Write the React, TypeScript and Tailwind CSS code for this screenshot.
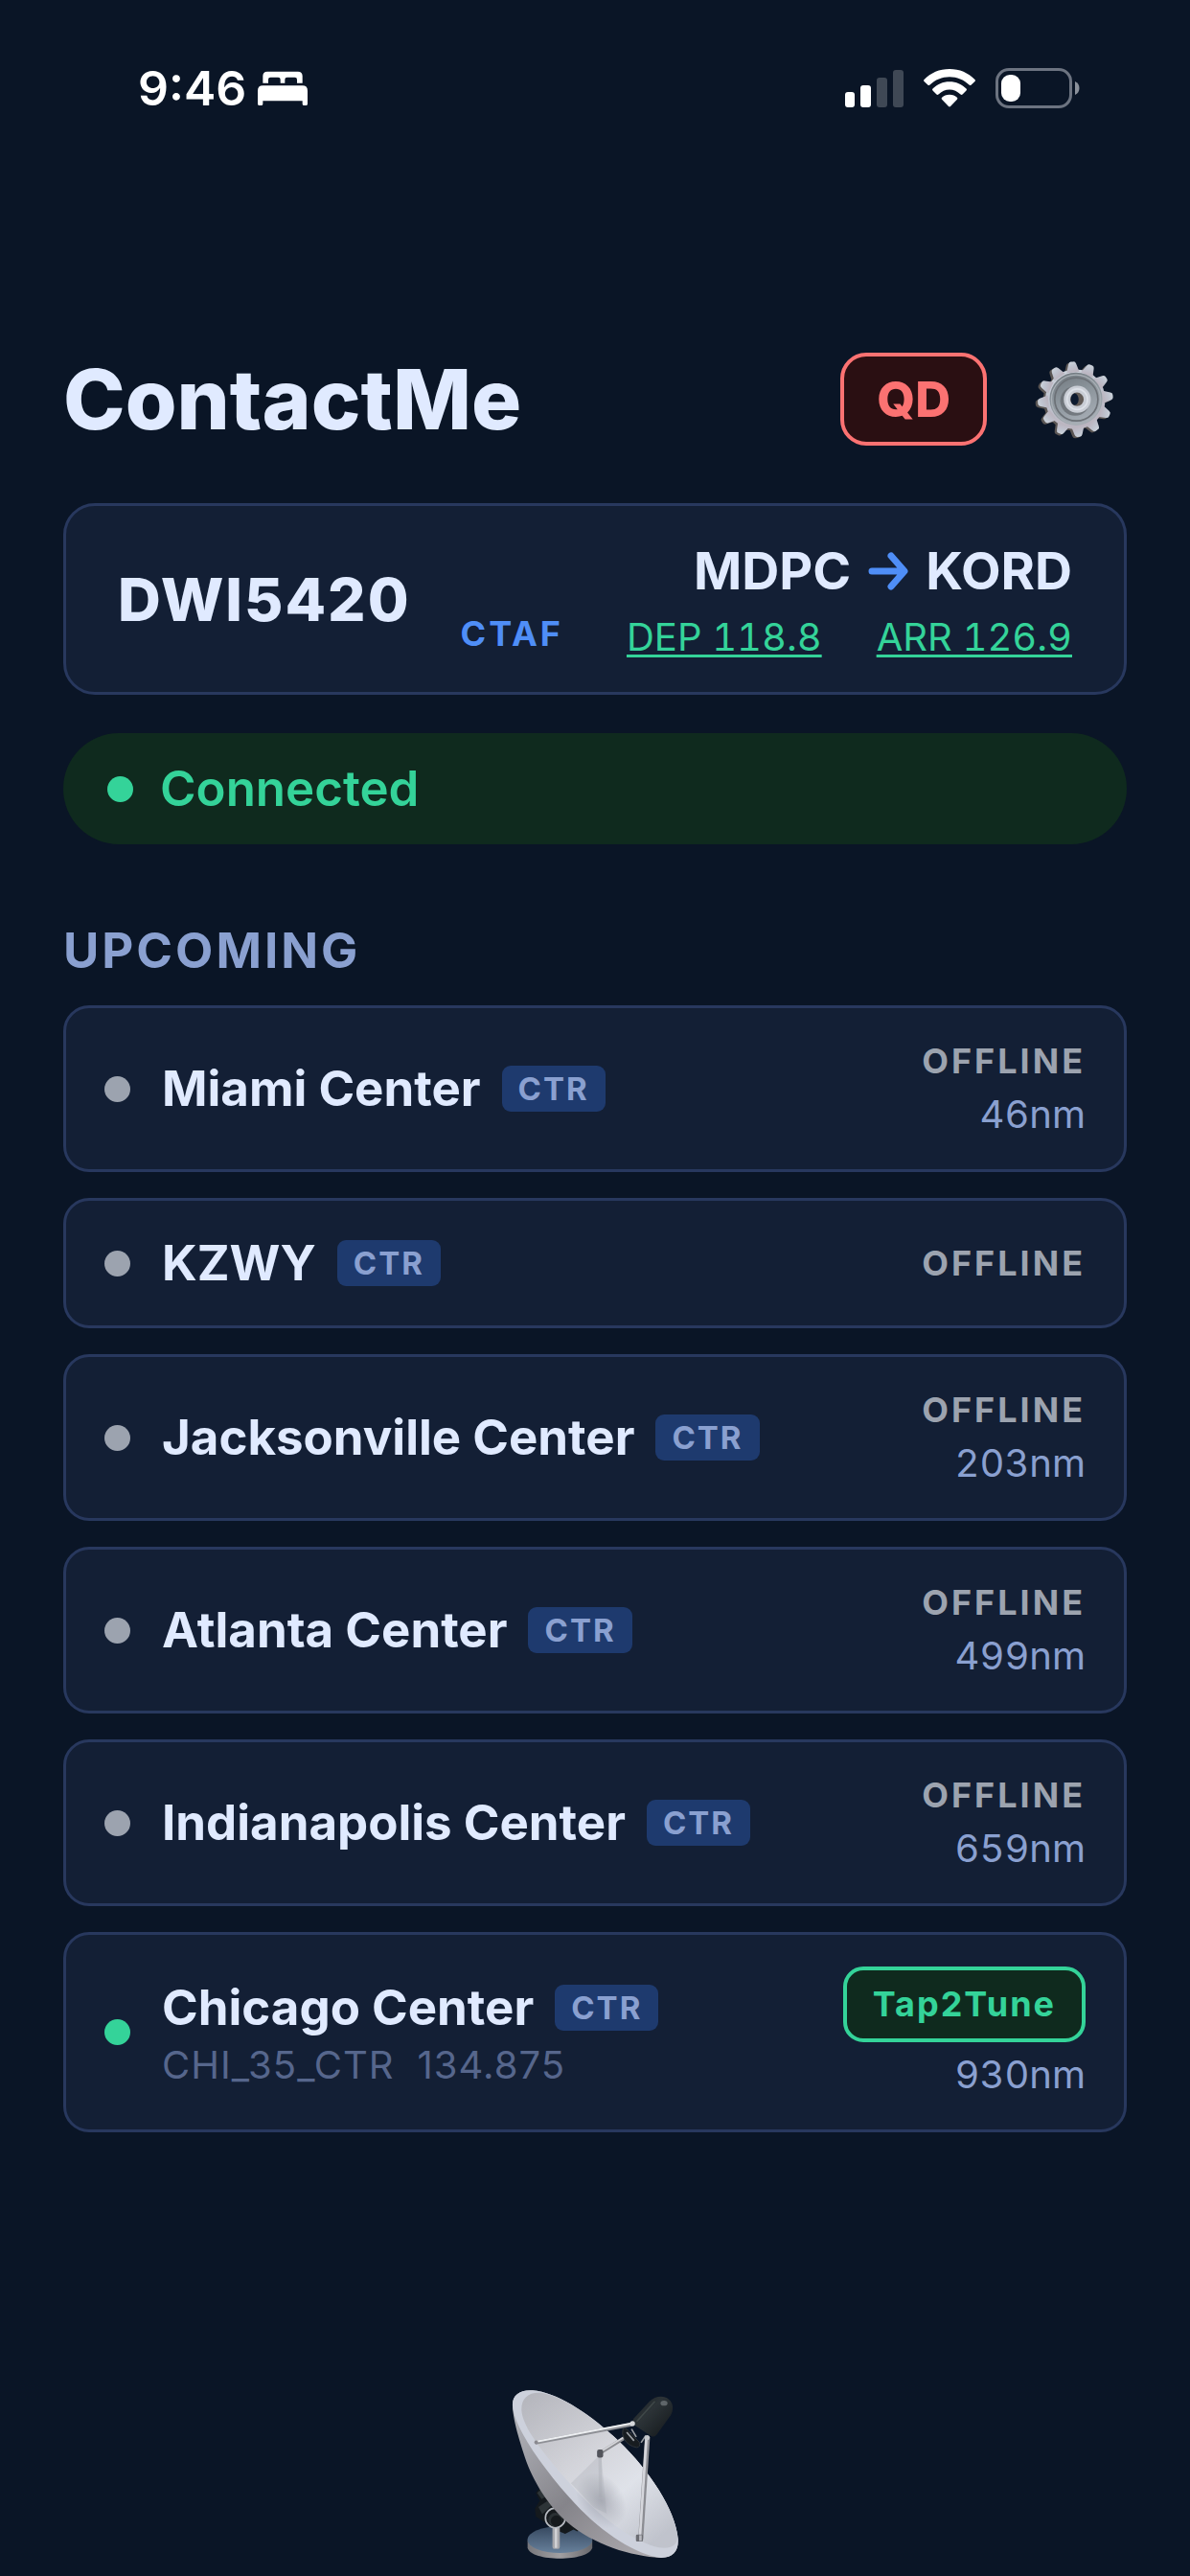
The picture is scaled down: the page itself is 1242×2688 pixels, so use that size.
import clsx from 'clsx';

type Sector = {
  name: string;
  online: boolean;
  distance?: string;
  callsign?: string;
  frequency?: string;
};

const sectors: Sector[] = [
  { name: 'Miami Center', online: false, distance: '46nm' },
  { name: 'KZWY', online: false },
  { name: 'Jacksonville Center', online: false, distance: '203nm' },
  { name: 'Atlanta Center', online: false, distance: '499nm' },
  { name: 'Indianapolis Center', online: false, distance: '659nm' },
  {
    name: 'Chicago Center',
    online: true,
    distance: '930nm',
    callsign: 'CHI_35_CTR',
    frequency: '134.875',
  },
];

const TEETH = [0, 30, 60, 90, 120, 150, 180, 210, 240, 270, 300, 330];

function BedIcon() {
  return (
    <svg viewBox="0 0 156 108" className="h-9 w-[52px]" fill="#fff" aria-hidden="true">
      <path d="M16 38V16Q16 2 30 2H126Q140 2 140 16V38H123V27Q123 20 116 20H92Q85 20 85 27V38H71V27Q71 20 64 20H40Q33 20 33 27V38Z" />
      <path d="M0 62Q0 46 16 46H140Q156 46 156 62V103Q156 109 148 109Q140 109 140 103V94H16V103Q16 109 8 109Q0 109 0 103Z" />
    </svg>
  );
}

function SignalIcon() {
  return (
    <svg viewBox="0 0 61 39" className="h-[39px] w-[61px]" fill="#fff" aria-hidden="true">
      <rect x="0" y="23" width="10" height="16" rx="3" />
      <rect x="16" y="16" width="11" height="23" rx="3" />
      <rect x="33" y="8" width="11" height="31" rx="3" opacity="0.22" />
      <rect x="50" y="0" width="11" height="39" rx="3" opacity="0.22" />
    </svg>
  );
}

function WifiIcon() {
  return (
    <svg viewBox="312 62 162 121" className="h-10 w-[54px]" fill="#fff" aria-hidden="true">
      <path d="M393 62C425 62 452 74 473 95Q476 98 473 101L461 113Q458 115 455 112C438 96 417 87 393 87C369 87 348 96 331 112Q328 115 325 113L313 101Q310 98 313 95C334 74 361 62 393 62Z" />
      <path d="M393 102C414 102 432 110 446 124Q449 127 446 130L434 142Q431 145 428 142C418 133 406 127 393 127C380 127 368 133 358 142Q355 145 352 142L340 130Q337 127 340 124C354 110 372 102 393 102Z" />
      <path d="M393 143C403 143 411 147 417 152Q420 155 417 158L396 180Q393 183 390 180L369 158Q366 155 369 152C375 147 383 143 393 143Z" />
    </svg>
  );
}

function BatteryIcon() {
  return (
    <svg viewBox="0 0 88 42" className="h-[42px] w-[88px]" aria-hidden="true">
      <rect x="1.5" y="1.5" width="77" height="39" rx="12.5" fill="none" stroke="#6c7380" strokeWidth="3" />
      <rect x="6" y="7" width="20" height="28" rx="9" fill="#fff" />
      <path d="M83 14Q87.500 16 87.500 21T83 28Z" fill="#8b919b" />
    </svg>
  );
}

function Gear({ fill }: { fill: string }) {
  return (
    <g fill={fill}>
      <circle r="93" />
      {TEETH.map((angle) => (
        <path
          key={angle}
          transform={`rotate(${angle - 5})`}
          d="M-20 -84L-12 -110Q-10 -117 -4 -117H4Q10 -117 12 -110L20 -84Z"
        />
      ))}
    </g>
  );
}

function GearIcon() {
  return (
    <svg viewBox="62 79 244 244" className="size-[82px]" aria-hidden="true">
      <defs>
        <linearGradient id="gearFace" x1="0" y1="0" x2="0.300" y2="1">
          <stop offset="0" stopColor="#d0d8df" />
          <stop offset="0.500" stopColor="#bfc3cf" />
          <stop offset="1" stopColor="#bbb5c0" />
        </linearGradient>
        <linearGradient id="gearWell" x1="0" y1="0" x2="0.400" y2="1">
          <stop offset="0" stopColor="#6d747b" />
          <stop offset="0.500" stopColor="#8b949b" />
          <stop offset="1" stopColor="#a4abb3" />
        </linearGradient>
      </defs>
      <g transform="translate(181 204)">
        <Gear fill="#5b5654" />
      </g>
      <g transform="translate(188 200)">
        <Gear fill="url(#gearFace)" />
      </g>
      <circle cx="190" cy="199" r="82" fill="url(#gearWell)" />
      <circle cx="190" cy="200" r="76" fill="none" stroke="#a9b0b6" strokeWidth="4" />
      <circle cx="191" cy="200" r="67" fill="none" stroke="#6c7177" strokeWidth="5" />
      <circle cx="187" cy="205" r="46" fill="#62676c" opacity="0.700" />
      <circle cx="194" cy="200" r="42" fill="#c9cdd5" />
      <circle cx="194" cy="200" r="32" fill="none" stroke="#dde1e8" strokeWidth="5" />
      <circle cx="193" cy="200" r="21" fill="#615a56" />
      <ellipse cx="186" cy="200" rx="12" ry="18" fill="#0d1b30" />
    </svg>
  );
}

function DishIcon() {
  return (
    <svg viewBox="92 100 530 532" className="size-[177px]" aria-hidden="true">
      <defs>
        <linearGradient id="dishFace" x1="0" y1="0" x2="0.800" y2="1">
          <stop offset="0" stopColor="#b3b4bb" />
          <stop offset="0.450" stopColor="#d3d4da" />
          <stop offset="0.700" stopColor="#dfe2e9" />
          <stop offset="1" stopColor="#c0c3cc" />
        </linearGradient>
        <linearGradient id="dishBack" x1="0" y1="0" x2="1" y2="1">
          <stop offset="0" stopColor="#b9bbc2" />
          <stop offset="0.500" stopColor="#85848a" />
          <stop offset="1" stopColor="#b7b4b8" />
        </linearGradient>
        <linearGradient id="dishBase" x1="0" y1="0" x2="0" y2="1">
          <stop offset="0" stopColor="#36485f" />
          <stop offset="1" stopColor="#67809b" />
        </linearGradient>
        <linearGradient id="dishFoot" x1="0" y1="0" x2="1" y2="0">
          <stop offset="0" stopColor="#77777c" />
          <stop offset="0.500" stopColor="#a19fa2" />
          <stop offset="1" stopColor="#68686d" />
        </linearGradient>
        <linearGradient id="dishHorn" x1="0" y1="0" x2="1" y2="1">
          <stop offset="0" stopColor="#1b2024" />
          <stop offset="0.400" stopColor="#2c3337" />
          <stop offset="1" stopColor="#121619" />
        </linearGradient>
        <radialGradient id="dishShade">
          <stop offset="0" stopColor="#8c8e99" stopOpacity="0.600" />
          <stop offset="1" stopColor="#8c8e99" stopOpacity="0" />
        </radialGradient>
      </defs>

      <path d="M144 575V598C150 620 195 631 245 631S340 620 347 598V575Z" fill="url(#dishFoot)" />
      <ellipse cx="245.500" cy="572" rx="102" ry="42" fill="url(#dishBase)" />
      <path d="M170 425L188 404L216 425L268 480L318 530L300 546L288 540L262 554L240 545L170 500L167 475L182 450Z" fill="#14191d" />
      <path d="M174 425L190 412L205 435L188 445ZM178 470L205 452L222 462L190 492Z" fill="#2d3437" />
      <rect x="222" y="530" width="23" height="71" rx="6" fill="#a5a6aa" />
      <rect x="229" y="530" width="8" height="68" fill="#d0d1d4" />
      <circle cx="231" cy="504" r="31" fill="#15191c" stroke="#b6bac0" strokeWidth="5" />
      <circle cx="231" cy="510" r="22" fill="#292f32" />
      <circle cx="234" cy="513" r="17" fill="#15191c" />

      <path
        d="M97 152C95 119 120 101 160 104C238 110 343 180 430 263C529 358 607 480 616 568C619 608 600 630 562 629C470 625 350 588 269 518C200 459 153 372 131 300C112 240 98 190 97 152Z"
        fill="url(#dishBack)"
      />
      <path
        d="M97 152C95 119 120 101 160 104C238 110 343 180 430 263C529 358 607 480 616 568C619 608 600 630 562 629C484 618 384 556 293 459C200 360 100 220 97 152Z"
        fill="#cdd1dc"
      />
      <path
        d="M125 165C124 126 151 107 190 112C260 125 350 190 430 263C529 358 607 480 614 560C616 590 595 603 555 597C478 580 372 504 280 400C194 303 128 220 125 165Z"
        fill="url(#dishFace)"
      />
      <ellipse cx="375" cy="450" rx="70" ry="95" fill="url(#dishShade)" transform="rotate(-35 375 450)" />
      <path d="M367 310L280 395L350 470L392 490L375 310Z" fill="#9799a3" opacity="0.220" />
      <path d="M366 310L368 440L378 440L376 310Z" fill="#a2a4ad" opacity="0.300" />

      <path d="M168 268L474 210" stroke="#8e9096" strokeWidth="12" />
      <path d="M168 265L474 207" stroke="#eceef1" strokeWidth="6" />
      <path d="M372 300L468 240" stroke="#8b8c91" strokeWidth="11" />
      <path d="M372 297L468 237" stroke="#d5d6da" strokeWidth="5" />
      <rect x="362" y="289" width="19" height="26" rx="6" fill="#52545b" />
      <circle cx="171" cy="267" r="6" fill="#8a8a90" />

      <path d="M443 226Q450 218 462 232L494 266Q500 282 486 283Q460 278 448 258Q438 240 443 226Z" fill="#171c20" stroke="#2d3338" strokeWidth="3" />
      <path d="M455 235L478 262M470 225L485 250M500 268L515 246" stroke="#999da3" strokeWidth="5" />
      <path d="M520 250L499 570" stroke="#8c8d93" strokeWidth="16" />
      <path d="M517 250L496 570" stroke="#d5d6dc" strokeWidth="8" />
      <rect x="484" y="556" width="22" height="22" rx="4" fill="#6c6d73" />
      <rect x="494" y="558" width="8" height="18" fill="#b9bac0" />
      <path
        d="M476 193L526 139C543 122 570 118 587 132C601 144 603 162 593 182L549 243Q543 251 533 248L483 216Q470 207 476 193Z"
        fill="url(#dishHorn)"
      />
      <path d="M488 200L542 140" stroke="#59635f" strokeWidth="5" strokeLinecap="round" opacity="0.450" />
      <ellipse cx="572" cy="144" rx="11" ry="8" fill="#848b8e" opacity="0.600" />
      <circle cx="473" cy="208" r="8" fill="#d6d8dc" />
      <circle cx="519" cy="252" r="8" fill="#c6c8cc" />
    </svg>
  );
}

function ArrowIcon() {
  return (
    <svg viewBox="0 0 42 40" className="h-10 w-[42px]" fill="none" stroke="#4f8ef7" strokeWidth="7" strokeLinecap="round" strokeLinejoin="round" aria-label="to">
      <path d="M4 20H37M24 4L38 20L24 36" />
    </svg>
  );
}

function StatusBar() {
  return (
    <div className="flex items-center justify-between pt-[62px] pr-[115px] pl-36 text-white">
      <div className="flex items-center gap-3">
        <span className="text-[50px] leading-[60px] font-semibold">9:46</span>
        <BedIcon />
      </div>
      <div className="flex items-center gap-[21px]">
        <SignalIcon />
        <WifiIcon />
        <BatteryIcon />
      </div>
    </div>
  );
}

function SectorRow({ sector }: { sector: Sector }) {
  return (
    <li className="flex items-center rounded-[27px] border-3 border-[#28385e] bg-[#131f35] px-10 py-[33px]">
      <span
        className={clsx(
          'size-[27px] shrink-0 rounded-full',
          sector.online ? 'bg-[#34d399]' : 'bg-[#9ca3af]',
        )}
      />
      <div className="ml-[33px] flex flex-1 flex-col gap-1">
        <div className="flex items-center gap-[22px]">
          <h3 className="text-[51px] leading-[64px] font-bold">{sector.name}</h3>
          <span className="rounded-[9px] bg-[#1e3a6e] px-[17px] text-[33px] leading-[48px] font-bold tracking-[2px] text-[#8aa0d0]">
            CTR
          </span>
        </div>
        {sector.callsign && (
          <p className="flex gap-6 text-[40px] leading-[48px] tracking-[1px] text-[#56668c]">
            <span>{sector.callsign}</span>
            <span>{sector.frequency}</span>
          </p>
        )}
      </div>
      <div className="flex flex-col items-end gap-2.5">
        {sector.online ? (
          <button className="rounded-[21px] border-4 border-[#34d399] bg-[#0f2a1e] px-[27px] text-[36px] leading-[71px] font-bold tracking-[2px] text-[#34d399]">
            Tap2Tune
          </button>
        ) : (
          <span className="text-[36px] leading-[44px] font-bold tracking-[3px] text-[#9ca3af]">OFFLINE</span>
        )}
        {sector.distance && (
          <span className="text-[40px] leading-[48px] text-[#8aa0d0] tabular-nums">{sector.distance}</span>
        )}
      </div>
    </li>
  );
}

export default function App() {
  return (
    <div className="min-h-screen bg-[#0a1526] font-[Inter,'Liberation_Sans',sans-serif] text-[#e0eaff]">
      <StatusBar />

      <main className="px-[66px] pt-[246px]">
        <header className="flex items-center justify-between">
          <h1 className="text-[87px] leading-[96px] font-extrabold">ContactMe</h1>
          <div className="flex items-center gap-9">
            <button className="rounded-[27px] border-4 border-[#fb7272] bg-[#2a0f12] px-[34px] text-[51px] leading-[89px] font-extrabold text-[#fb7272]">
              QD
            </button>
            <button className="px-3.5" aria-label="Settings">
              <GearIcon />
            </button>
          </div>
        </header>

        <section className="mt-[60px] flex items-center rounded-[33px] border-3 border-[#28385e] bg-[#131f35] px-[54px] pt-9 pb-[34px]">
          <h2 className="text-[62px] leading-[80px] font-extrabold tracking-[2px]">DWI5420</h2>
          <div className="ml-auto flex items-end gap-[66px]">
            <span className="mb-[5px] text-[36px] leading-[44px] font-bold tracking-[3px] text-[#4f8ef7]">CTAF</span>
            <div className="flex flex-col items-end gap-[13px]">
              <div className="flex items-center gap-[18px] text-[54px] leading-[64px] font-bold">
                <span>MDPC</span>
                <ArrowIcon />
                <span>KORD</span>
              </div>
              <div className="flex gap-[57px] text-[40px] leading-[47px] text-[#34d399] tabular-nums">
                <a href="#dep" className="underline decoration-3 underline-offset-4">DEP 118.8</a>
                <a href="#arr" className="underline decoration-3 underline-offset-4">ARR 126.9</a>
              </div>
            </div>
          </div>
        </section>

        <div className="mt-10 flex items-center gap-7 rounded-full bg-[#0f2a1e] px-[46px] py-7 text-[#34d399]">
          <span className="size-[27px] rounded-full bg-[#34d399]" />
          <span className="text-[51px] leading-[60px] font-semibold">Connected</span>
        </div>

        <h2 className="mt-[81px] text-[51px] leading-[60px] font-bold tracking-[3px] text-[#8aa0d0]">UPCOMING</h2>
        <ul className="mt-[27px] flex flex-col gap-[27px]">
          {sectors.map((sector) => (
            <SectorRow key={sector.name} sector={sector} />
          ))}
        </ul>

        <div className="mt-[268px] flex justify-center">
          <DishIcon />
        </div>
      </main>
    </div>
  );
}
